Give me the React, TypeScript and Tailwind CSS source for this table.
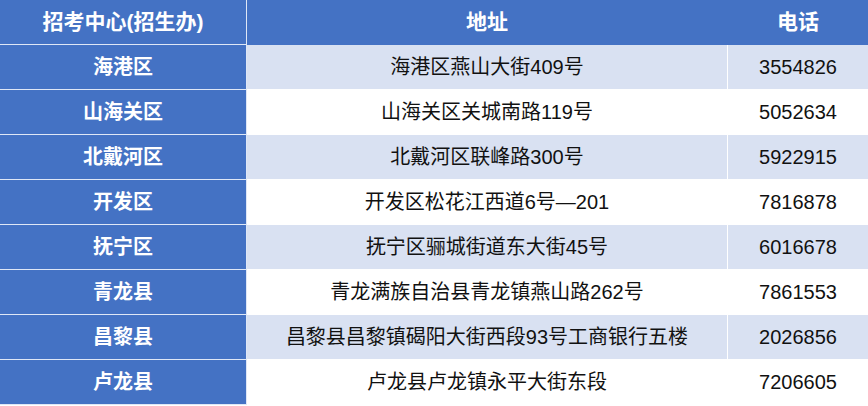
const rows = [
  ['海港区', '海港区燕山大街409号', '3554826'],
  ['山海关区', '山海关区关城南路119号', '5052634'],
  ['北戴河区', '北戴河区联峰路300号', '5922915'],
  ['开发区', '开发区松花江西道6号—201', '7816878'],
  ['抚宁区', '抚宁区骊城街道东大街45号', '6016678'],
  ['青龙县', '青龙满族自治县青龙镇燕山路262号', '7861553'],
  ['昌黎县', '昌黎县昌黎镇碣阳大街西段93号工商银行五楼', '2026856'],
  ['卢龙县', '卢龙县卢龙镇永平大街东段', '7206605'],
]

export default function App() {
  return (
    <div className="w-[868px] h-[406px] bg-white font-['Liberation_Sans','Noto_Sans_CJK_SC',sans-serif] overflow-hidden">
      <div className="grid grid-cols-[247px_481px_140px] auto-rows-[45px]">
        {/* header */}
        <div className="bg-[#4472c4] text-white font-bold text-[21px] flex items-center justify-center border-r border-b border-[#dfe7f6]">
          招考中心(招生办)
        </div>
        <div className="bg-[#4472c4] text-white font-bold text-[21px] flex items-center justify-center border-r border-b border-[#4472c4]">
          地址
        </div>
        <div className="bg-[#4472c4] text-white font-bold text-[21px] flex items-center justify-center border-b border-[#4472c4]">
          电话
        </div>

        {rows.map((r, i) => {
          const shade = i % 2 === 0 ? 'bg-[#d9e1f2]' : 'bg-white'
          return [
            <div
              key={`a${i}`}
              className="bg-[#4472c4] text-white font-bold text-[20px] flex items-center justify-center border-r border-b border-[#dfe7f6]"
            >
              {r[0]}
            </div>,
            <div
              key={`b${i}`}
              className={`${shade} text-[#111] text-[20px] flex items-center justify-center border-r border-b border-white`}
            >
              {r[1]}
            </div>,
            <div
              key={`c${i}`}
              className={`${shade} text-[#111] text-[20px] flex items-center justify-center border-b border-white`}
            >
              {r[2]}
            </div>,
          ]
        })}
      </div>
    </div>
  )
}
